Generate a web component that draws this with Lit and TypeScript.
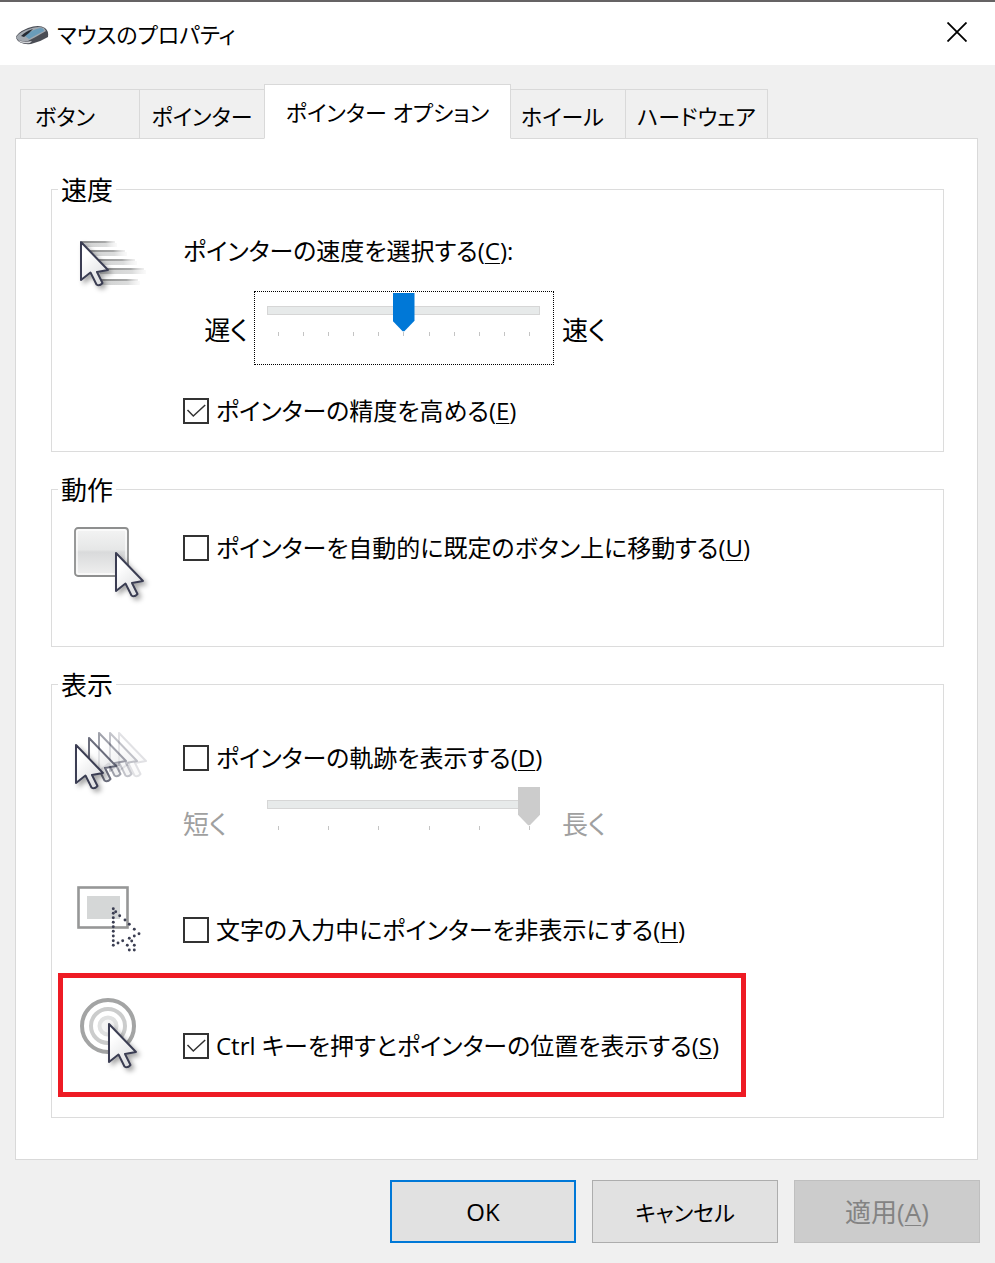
import { LitElement, html, css, svg } from "lit";
import { customElement, property, state } from "lit/decorators.js";

const pointerPath = "M0 0V38L9.500 30.500L15.500 42.500Q18.500 44.500 21.500 41L16 30L27 28Z";

const pointer = (x: number, y: number, opacity = 1) => svg`
  <path d=${pointerPath} transform="translate(${x} ${y})" opacity=${opacity}
    fill="url(#body)" stroke="#3b3e52" stroke-width="2" stroke-linejoin="round"></path>`;

const defs = svg`
  <defs>
    <linearGradient id="body" x1="0" y1="0" x2="0.600" y2="1">
      <stop offset="0.300" stop-color="#fff"></stop>
      <stop offset="1" stop-color="#dfe0e2"></stop>
    </linearGradient>
    <linearGradient id="plate" x1="0" y1="0" x2="0" y2="1">
      <stop offset="0" stop-color="#f4f4f4"></stop>
      <stop offset="0.450" stop-color="#e6e7e7"></stop>
      <stop offset="0.500" stop-color="#d9dadb"></stop>
      <stop offset="1" stop-color="#f0f0f0"></stop>
    </linearGradient>
    <linearGradient id="streak" x1="0" y1="0" x2="1" y2="0">
      <stop offset="0" stop-color="#8f9090"></stop>
      <stop offset="0.700" stop-color="#a8a9a9"></stop>
      <stop offset="1" stop-color="#ccc" stop-opacity="0.300"></stop>
    </linearGradient>
    <linearGradient id="haze" x1="0" y1="0" x2="1" y2="0">
      <stop offset="0" stop-color="#cfd0d0"></stop>
      <stop offset="0.700" stop-color="#dcdddd"></stop>
      <stop offset="1" stop-color="#eee" stop-opacity="0.300"></stop>
    </linearGradient>
    <filter id="shade" x="-30%" y="-30%" width="180%" height="180%">
      <feDropShadow dx="3" dy="3" stdDeviation="2.500" flood-color="#000" flood-opacity="0.350"></feDropShadow>
    </filter>
  </defs>`;

const streaks: [number, number, number][] = [
  [8, 9, 33], [12, 18, 39], [18, 27, 43], [26, 36, 44], [26, 47, 38],
];

const dots: [number, number][] = [
  [39.3, 26.7], [41.7, 29.7], [39.3, 31.3], [45.7, 33.7], [39.3, 35.7], [51, 38], [39.3, 40.3],
  [55.3, 42.3], [39.3, 44.7], [60.3, 47.3], [39.3, 49.3], [65, 51.7], [39.3, 54], [60.3, 54],
  [55.3, 56.3], [57.7, 59], [39.3, 58.7], [48.7, 58.7], [44, 61], [39.3, 63.3], [53.3, 63.3],
  [60.3, 63.3], [55.3, 68], [60.3, 68],
];

const icons: Record<string, unknown> = {
  speed: svg`
    ${streaks.map(([x, y, w]) => svg`
      <rect x=${x} y=${y - 1} width=${w} height="2" fill="url(#streak)"></rect>
      <rect x=${x} y=${y + 1} width=${w + 2} height="4" fill="url(#haze)"></rect>`)}
    <g filter="url(#shade)">${pointer(7, 9)}</g>`,
  snap: svg`
    <rect x="1" y="2" width="53" height="48" rx="3" fill="url(#plate)" stroke="#8e8f8f" stroke-width="1.800"></rect>
    <rect x="3" y="4" width="49" height="44" rx="2" fill="none" stroke="#fff" stroke-width="1.500" opacity="0.800"></rect>
    <g filter="url(#shade)">${pointer(42, 27)}</g>`,
  trail: svg`
    ${pointer(45, 5, 0.150)}${pointer(36, 5, 0.300)}${pointer(25, 5, 0.480)}${pointer(15, 10, 0.750)}
    <g filter="url(#shade)">${pointer(2, 17)}</g>`,
  hide: svg`
    <rect x="4.500" y="5.500" width="49" height="40" fill="#fff" stroke="#969797" stroke-width="2.600"></rect>
    <rect x="13" y="14" width="33" height="23" fill="#d5d7d7"></rect>
    ${dots.map(([x, y]) => svg`<circle cx=${x} cy=${y} r="1.450" fill="#3b3e52"></circle>`)}`,
  locate: svg`
    <circle cx="34" cy="28" r="26" fill="#fff" stroke="#a3a4a4" stroke-width="4"></circle>
    <circle cx="34" cy="28" r="17" fill="none" stroke="#cbcccc" stroke-width="4"></circle>
    <circle cx="34" cy="28" r="8.500" fill="#f4f4f4" stroke="#e0e1e1" stroke-width="4"></circle>
    <g filter="url(#shade)">${pointer(35, 26)}</g>`,
};

@customElement("pointer-icon")
class PointerIcon extends LitElement {
  @property() name = "speed";
  static styles = css`
    :host { display: block; width: 72px; height: 72px; }
    svg { display: block; overflow: visible; }
  `;
  render() {
    return html`<svg width="72" height="72" viewBox="0 0 72 72" aria-hidden="true">${defs}${icons[this.name]}</svg>`;
  }
}

@customElement("app-root")
class AppRoot extends LitElement {
  @state() private active = 2;
  private tabs = ["ボタン", "ポインター", "ポインター オプション", "ホイール", "ハードウェア"];

  static styles = css`
    :host {
      display: block;
      min-height: 100vh;
      box-sizing: border-box;
      background: #f0f0f0;
      color: #000;
      border-top: 2px solid #656364;
      font: 400 26px/36px "Open Sans", "Noto Sans CJK JP", sans-serif;
      font-feature-settings: "palt";
    }
    *, *::before, *::after { box-sizing: border-box; }
    button, input { font: inherit; font-feature-settings: inherit; color: inherit; margin: 0; }
    .titlebar { display: flex; align-items: center; height: 63px; padding: 0 16px; gap: 8px; background: #fff; }
    .title { flex: 1; margin: 0; font: inherit; font-size: 22px; }
    .close { width: 44px; height: 44px; padding: 0 0 4px; border: 0; background: none; display: grid; place-items: center; }
    .tabs {
      display: grid;
      grid-template-columns: 120px 125px 246px 115px 142px;
      align-items: end;
      margin: 19px 0 -1px 20px;
      position: relative;
    }
    .tab {
      height: 50px;
      padding: 3px 0 0;
      border: 1px solid #d9d9d9;
      border-left-width: 0;
      background: #f0f0f0;
      font-size: 22px;
      white-space: nowrap;
    }
    .tab:first-child { border-left-width: 1px; padding-left: 14px; text-align: left; }
    .tab:nth-child(4) { padding-left: 10px; text-align: left; }
    .tab.active { height: 55px; padding: 0; margin-left: -1px; border-left-width: 1px; border-bottom-color: #fff; background: #fff; }
    .panel {
      margin: 0 17px 0 15px;
      padding: 31px 33px 41px 35px;
      border: 1px solid #d9d9d9;
      background: #fff;
      display: grid;
      gap: 18px;
    }
    .group { min-width: 0; margin: 0; padding: 0; border: 1px solid #dcdcdc; }
    .legend { margin-left: 6px; padding: 2px 3px 0; }
    .rows { display: grid; gap: 23px; padding: 25px 22px 22px; }
    .rows.short { padding: 18px 22px 48px; }
    .rows.tall { padding-bottom: 20px; }
    .row { display: grid; grid-template-columns: 72px auto; column-gap: 37px; justify-content: start; align-items: start; }
    .mid { padding-top: 12px; }
    .near { padding-top: 4px; }
    .low { padding-top: 30px; }
    .field { display: block; font-size: 24px; }
    .check { display: flex; align-items: center; gap: 7px; height: 36px; font-size: 24px; white-space: nowrap; }
    .box { appearance: none; width: 26px; height: 26px; flex: none; border: 2px solid #333; background: #fff; }
    .box:checked {
      background: #fff url("data:image/svg+xml,%3Csvg xmlns='http://www.w3.org/2000/svg' viewBox='0 0 22 22'%3E%3Cpath d='M2.500 10L8.300 16L20.200 5' fill='none' stroke='%23333' stroke-width='1.500'/%3E%3C/svg%3E");
    }
    .scale { display: grid; grid-template-columns: 71px 300px auto; align-items: center; }
    .scale.first { margin: 22px 0 28px; }
    .scale.second { margin-top: 9px; color: #a0a0a0; }
    .from, .to { padding-top: 3px; }
    .scale.first .from { text-align: right; padding-right: 6px; }
    .to { padding-left: 8px; }
    .track { height: 74px; padding: 1px 13px 0 12px; border: 1px dotted transparent; }
    .track.focused { border-color: #000; }
    .slider { appearance: none; display: block; width: 100%; height: 35px; margin-bottom: 4px; background: none; outline: none; }
    .slider::-webkit-slider-runnable-track { height: 9px; box-shadow: inset 0 0 0 1px #d6d6d6; background: #e7eaea; }
    .slider::-webkit-slider-thumb {
      appearance: none;
      width: 22px;
      height: 39px;
      margin-top: -13px;
      background: #0078d7;
      clip-path: polygon(0 0, 100% 0, 100% 71%, 54% 98%, 46% 98%, 0 71%);
    }
    .slider:disabled::-webkit-slider-thumb { background: #ccc; }
    .ticks { display: flex; justify-content: space-between; padding: 0 10px 0 11px; }
    .tick { width: 1px; height: 4px; background: #c4c4c4; }
    .highlight {
      width: fit-content;
      margin: -4px 0 0 -16px;
      padding: 20px 22px 22px 11px;
      border: 5px solid #ee1b24;
    }
    .footer { display: flex; justify-content: flex-end; gap: 16px; padding: 20px 15px 20px; }
    .action { width: 186px; height: 63px; padding: 1px 0 0; border: 1px solid #adadad; background: #e1e1e1; }
    .action.kana { font-size: 22px; }
    .action.default { border: 2px solid #0078d7; font-size: 24px; }
    .action:disabled { border-color: #bfbfbf; background: #ccc; color: #838383; }
    u { text-decoration-thickness: 1px; text-underline-offset: 3px; }
  `;

  private check(id: string, text: string, key: string, checked = false) {
    return html`<div class="check">
      <input class="box" type="checkbox" id=${id} .checked=${checked} />
      <label for=${id}>${text}(<u>${key}</u>)</label>
    </div>`;
  }

  private ticks(count: number) {
    return html`<div class="ticks">${Array.from({ length: count }, () => html`<span class="tick"></span>`)}</div>`;
  }

  render() {
    return html`
      <header class="titlebar">
        <svg width="33" height="22" viewBox="0 0 33 22" aria-hidden="true">
          <path d="M0 15Q0 10 12 5Q23 1 29 5Q33 8 32 14Q24 19 15 21Q3 22 0 15Z" fill="#4a4d55"></path>
          <path d="M0 15Q1 11 10 7Q22 2 28 5L30 8Q20 14 12 18Q4 19 0 15Z" fill="#a3a9b0"></path>
          <path d="M9 13Q15 7 24 5Q28 5 28 8Q20 12 13 16Z" fill="#6a9cba"></path>
          <path d="M5 13Q10 8 17 6L13 10L8 14Z" fill="#252a33"></path>
          <path d="M2 17Q8 20 16 18L14 20Q5 21 2 17Z" fill="#d2d4d8"></path>
        </svg>
        <h1 class="title">マウスのプロパティ</h1>
        <button class="close" aria-label="閉じる">
          <svg width="20" height="20" viewBox="0 0 20 20"><path d="M0.500 0.500L19.500 19.500M19.500 0.500L0.500 19.500" stroke="#000" stroke-width="1.800"></path></svg>
        </button>
      </header>
      <nav class="tabs" role="tablist">
        ${this.tabs.map((t, i) => html`<button class="tab ${i === this.active ? "active" : ""}" role="tab"
          aria-selected=${i === this.active} @click=${() => (this.active = i)}>${t}</button>`)}
      </nav>
      <main class="panel">
        <fieldset class="group">
          <legend class="legend">速度</legend>
          <div class="rows">
            <div class="row">
              <pointer-icon name="speed"></pointer-icon>
              <div>
                <label class="field" for="speed">ポインターの速度を選択する(<u>C</u>):</label>
                <div class="scale first">
                  <span class="from">遅く</span>
                  <div class="track focused">
                    <input class="slider" type="range" id="speed" min="0" max="10" value="5" />
                    ${this.ticks(11)}
                  </div>
                  <span class="to">速く</span>
                </div>
                ${this.check("precision", "ポインターの精度を高める", "E", true)}
              </div>
            </div>
          </div>
        </fieldset>
        <fieldset class="group">
          <legend class="legend">動作</legend>
          <div class="rows short">
            <div class="row">
              <pointer-icon name="snap"></pointer-icon>
              <div class="near">${this.check("snap", "ポインターを自動的に既定のボタン上に移動する", "U")}</div>
            </div>
          </div>
        </fieldset>
        <fieldset class="group">
          <legend class="legend">表示</legend>
          <div class="rows tall">
            <div class="row">
              <pointer-icon name="trail"></pointer-icon>
              <div class="mid">
                ${this.check("trail", "ポインターの軌跡を表示する", "D")}
                <div class="scale second">
                  <span class="from">短く</span>
                  <div class="track">
                    <input class="slider" type="range" aria-label="軌跡の長さ" min="0" max="5" value="5" disabled />
                    ${this.ticks(6)}
                  </div>
                  <span class="to">長く</span>
                </div>
              </div>
            </div>
            <div class="row">
              <pointer-icon name="hide"></pointer-icon>
              <div class="low">${this.check("hide", "文字の入力中にポインターを非表示にする", "H")}</div>
            </div>
            <div class="row highlight">
              <pointer-icon name="locate"></pointer-icon>
              <div class="low">${this.check("locate", "Ctrl キーを押すとポインターの位置を表示する", "S", true)}</div>
            </div>
          </div>
        </fieldset>
      </main>
      <footer class="footer">
        <button class="action default">OK</button>
        <button class="action kana">キャンセル</button>
        <button class="action" disabled>適用(<u>A</u>)</button>
      </footer>
    `;
  }
}
